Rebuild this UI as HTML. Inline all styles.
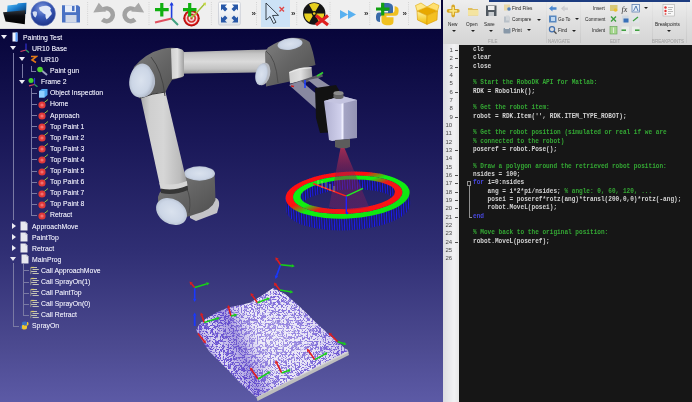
<!DOCTYPE html>
<html><head><meta charset="utf-8">
<style>*{margin:0;padding:0;box-sizing:border-box}
html,body{width:692px;height:402px;overflow:hidden;background:#07053a}
body{position:relative;font-family:"Liberation Sans",sans-serif;-webkit-font-smoothing:antialiased}
.abs{position:absolute}
svg{display:block}
#view{left:0;top:28px;width:443px;height:374px;background:linear-gradient(#07053a 0%,#1a1858 30%,#302f74 60%,#4c4a90 85%,#5c5aa6 100%)}
#scene{position:absolute;left:0;top:0}
#tb{will-change:transform;left:0;top:0;width:441px;height:28.5px;background:#efefef;border-bottom:1px solid #d8d8d8}
.sep{position:absolute;top:2px;width:1px;height:23px;border-left:1px dotted #c4c4c4}
.ic{position:absolute}
.tx{position:absolute;font-size:8px;transform:scaleX(.86);transform-origin:0 50%;-webkit-font-smoothing:antialiased;color:#e6e6f2;text-shadow:0 0 0.5px rgba(230,230,255,0.6);line-height:11px;white-space:nowrap}
.tri{position:absolute;width:0;height:0;border-left:3.6px solid transparent;border-right:3.6px solid transparent;border-top:4.5px solid #ececf4}
.trr{position:absolute;width:0;height:0;border-top:3.3px solid transparent;border-bottom:3.3px solid transparent;border-left:4.8px solid #ececf4}
.vl{position:absolute;width:1px;background:#7a7aa4}
.hl{position:absolute;height:1px;background:#7a7aa4}
#ml{left:441px;top:0;width:251px;height:402px;background:#161616;border-left:2.5px solid transparent;background-clip:padding-box;will-change:transform}
#rib{left:0;top:0;width:249px;height:44.5px;background:linear-gradient(#eeeeee,#e2e2e2 40%,#d4d4d4)}
#gut{left:0;top:44px;width:16px;height:358px;background:linear-gradient(90deg,#dcdce0,#f2f2f4 70%,#e6e6e6)}
.code{position:absolute;left:30px;top:45px;font-family:"Liberation Mono",monospace;font-size:6.6px;line-height:8.3px;white-space:pre;color:#d4d4d4;font-weight:bold;transform:scaleX(.924);transform-origin:0 50%}
.ln{position:absolute;left:1px;top:45px;font-family:"Liberation Sans",sans-serif;font-size:6px;line-height:8.3px;color:#484848;white-space:pre}
.cm{color:#34a834}
.kw{color:#4848e0}
.rl{position:absolute;font-size:5.9px;line-height:8px;color:#1c1c1c;white-space:nowrap;transform:scaleX(.8);transform-origin:0 50%;margin-top:-0.3px}
.lab{position:absolute;font-size:5px;line-height:8px;color:#a0a0a0;white-space:nowrap;transform:scaleX(.9);transform-origin:0 50%}
#topstrip{position:absolute;left:45.5px;top:0;width:201px;height:1.6px;background:#1c3c80;z-index:3}
#labband{position:absolute;left:0;top:37px;width:249px;height:7.5px;background:linear-gradient(#d2d2d2,#cbcbcb);z-index:-1}
.dash{position:absolute;left:11.8px;width:3.5px;height:0.9px;background:#505050;margin-top:-0.4px}
.arr{position:absolute;width:0;height:0;border-left:2px solid transparent;border-right:2px solid transparent;border-top:2.2px solid #202020}
.rsep{position:absolute;top:2px;width:1px;height:41px;background:linear-gradient(#e8e8e8,#c8c8c8)}
.fold{position:absolute;left:23.5px;width:4.6px;height:4.6px;border:0.7px solid #909090;background:#161616}
.foldl{position:absolute;left:25.5px;width:0.7px;background:#909090}
.foldh{position:absolute;left:25.5px;width:3px;height:0.7px;background:#909090}
.chev{position:absolute;top:8.5px;font-size:8px;line-height:10px;color:#303030;font-weight:bold}

</style></head><body>
<div id="view" class="abs"></div>
<svg id="scene" width="443" height="402" viewBox="0 0 443 402" style="position:absolute;left:0;top:0">
<defs>
 <linearGradient id="gUA" x1="0" y1="0" x2="0" y2="1">
  <stop offset="0" stop-color="#a4a4a4"/><stop offset="0.18" stop-color="#c6c6c6"/><stop offset="0.5" stop-color="#dadada"/><stop offset="0.8" stop-color="#c2c2c2"/><stop offset="1" stop-color="#999"/>
 </linearGradient>
 <linearGradient id="gLA" x1="0" y1="0" x2="1" y2="0">
  <stop offset="0" stop-color="#a8a8a8"/><stop offset="0.2" stop-color="#cfcfcf"/><stop offset="0.5" stop-color="#d6d6d6"/><stop offset="0.85" stop-color="#bcbcbc"/><stop offset="1" stop-color="#9a9a9a"/>
 </linearGradient>
 <linearGradient id="gHous" x1="0" y1="0" x2="1" y2="1">
  <stop offset="0" stop-color="#808080"/><stop offset="0.45" stop-color="#666"/><stop offset="1" stop-color="#4e4e4e"/>
 </linearGradient>
 <radialGradient id="gCap" cx="0.5" cy="0.5" r="0.55">
  <stop offset="0" stop-color="#dae2ee"/><stop offset="0.7" stop-color="#ccd6e6"/><stop offset="0.9" stop-color="#bcc6d6"/><stop offset="1" stop-color="#a0a8b6"/>
 </radialGradient>
 <linearGradient id="gRing" x1="0" y1="0" x2="1" y2="0">
  <stop offset="0" stop-color="#d0d0d0"/><stop offset="0.5" stop-color="#e0e0e0"/><stop offset="1" stop-color="#a0a0a0"/>
 </linearGradient>
 <linearGradient id="gBox" x1="0" y1="0" x2="1" y2="0">
  <stop offset="0" stop-color="#b0b0d0"/><stop offset="0.5" stop-color="#d0d0ec"/><stop offset="0.56" stop-color="#f0f0ff"/><stop offset="0.62" stop-color="#a4a4c4"/><stop offset="1" stop-color="#9494b4"/>
 </linearGradient>
 <linearGradient id="gCone" x1="0" y1="0" x2="0" y2="1">
  <stop offset="0" stop-color="#c03050" stop-opacity="0.8"/><stop offset="0.4" stop-color="#902050" stop-opacity="0.45"/><stop offset="1" stop-color="#802060" stop-opacity="0.4"/>
 </linearGradient>
 <linearGradient id="gBandO" x1="0" y1="0" x2="1" y2="1">
  <stop offset="0" stop-color="#ff1010"/><stop offset="0.36" stop-color="#ff1010"/><stop offset="0.48" stop-color="#10f010"/><stop offset="1" stop-color="#10e010"/>
 </linearGradient>
 <linearGradient id="gBandI" x1="0" y1="0" x2="1" y2="1">
  <stop offset="0" stop-color="#10f010"/><stop offset="0.42" stop-color="#10f010"/><stop offset="0.54" stop-color="#f01818"/><stop offset="1" stop-color="#ff1010"/>
 </linearGradient>
 <pattern id="pBlue" width="2.5" height="20" patternUnits="userSpaceOnUse">
  <rect width="0.9" height="20" fill="#1c1cf4"/><rect x="0.9" width="1.6" height="20" fill="#0c0c50" fill-opacity="0.35"/>
 </pattern>
 <pattern id="pDots" width="7" height="7" patternUnits="userSpaceOnUse">
  <rect width="7" height="7" fill="#d8d4f0"/>
  <path d="M0 1Q2 0 3 2T6 3M1 5Q2 3 4 5T7 6M5 0.5L6.5 1.5" stroke="#7a5ae0" stroke-width="0.8" fill="none"/>
 </pattern>
 <pattern id="pDots2" width="5" height="5" patternUnits="userSpaceOnUse">
  <rect width="5" height="5" fill="#9a80e8"/>
  <path d="M0 1Q2 2 3 1T5 3M1 4L2 3" stroke="#e8e4f8" stroke-width="0.6" fill="none"/>
 </pattern>
 <filter id="fNoise" x="0" y="0" width="1" height="1" filterUnits="objectBoundingBox">
  <feTurbulence type="turbulence" baseFrequency="0.38" numOctaves="1" seed="5" result="n"/>
  <feColorMatrix in="n" type="matrix" values="0 0 0 0 0  0 0 0 0 0  0 0 0 0 0  -9 0 0 0 1.7" result="a"/>
  <feFlood flood-color="#6c54d4" result="w"/>
  <feComposite in="w" in2="a" operator="in" result="wd"/>
  <feComposite in="wd" in2="SourceGraphic" operator="atop"/>
 </filter>
 <linearGradient id="gSurfDark" gradientUnits="userSpaceOnUse" x1="196" y1="345" x2="335" y2="285">
  <stop offset="0" stop-color="#5038c0" stop-opacity="0.45"/>
  <stop offset="0.13" stop-color="#5038c0" stop-opacity="0.05"/>
  <stop offset="0.26" stop-color="#5038c0" stop-opacity="0.42"/>
  <stop offset="0.42" stop-color="#ffffff" stop-opacity="0.12"/>
  <stop offset="0.62" stop-color="#ffffff" stop-opacity="0.05"/>
  <stop offset="0.85" stop-color="#5038c0" stop-opacity="0.12"/>
  <stop offset="1" stop-color="#5038c0" stop-opacity="0.25"/>
 </linearGradient>
 <radialGradient id="gSurfLight" cx="0.55" cy="0.45" r="0.45">
  <stop offset="0" stop-color="#ffffff" stop-opacity="0.35"/><stop offset="1" stop-color="#ffffff" stop-opacity="0"/>
 </radialGradient>
</defs>

<!-- ===== Robot ===== -->
<!-- lower arm (elbow to base) -->
<!-- base -->
<path d="M190 203 L216 198 Q220 200 219 206 L217 213 L196 221 L190 218 Z" fill="#c4c4c8"/>
<path d="M158 197 Q159 189 170 187.5 L184 186 L184 173.5 L214.6 173.5 L215.5 200 Q212 210 196 214 Q180 220 166 218 Q157 207 158 197 Z" fill="url(#gHous)"/>
<path d="M186 187 Q192 198 189 213" stroke="#4a4a4a" stroke-width="1" fill="none"/>
<ellipse cx="199.5" cy="173.5" rx="15.5" ry="7.2" fill="url(#gCap)"/>
<path d="M140 94 L165 90 L187 183 Q174 189 160 186 Z" fill="url(#gLA)"/>
<path d="M159.5 183 Q172 187 186.8 181 L187.6 186 Q174 192 160.5 189 Z" fill="#d6d6d6"/>
<path d="M160.5 188.5 Q174 191.5 187.6 185.5 L188 190 Q174 196 161 193 Z" fill="#363636"/>
<ellipse cx="171.5" cy="211.5" rx="16.5" ry="12.3" transform="rotate(32 171.5 211.5)" fill="url(#gCap)"/>
<!-- upper arm -->
<path d="M176 52.3 L268 49.5 L268 72.2 L176 73.8 Z" fill="url(#gUA)"/>
<!-- shoulder housing -->
<path d="M134 67 Q146 53 162 49 Q170 47 176 48 L183 50 L183 77 L172 80 Q168 86 165.5 92 Q152 93 140 98.5 Q131 92 130 80 Z" fill="url(#gHous)"/>
<path d="M140 98.3 Q152 93.2 165.5 92" stroke="#383838" stroke-width="1" fill="none"/>
<path d="M151 57 Q162 70 165 96" stroke="#444" stroke-width="1" fill="none"/>
<path d="M171 48.5 L177 48 Q183 49 184 52 L184 76 Q180 78 172 79 Z" fill="url(#gRing)"/>
<path d="M143 64 Q156 70 155 84 Q152 97 141 97.5 Z" fill="#b4bccc"/>
<ellipse cx="141" cy="80.5" rx="11.6" ry="17" transform="rotate(10 141 80.5)" fill="url(#gCap)"/>
<!-- wrist -->
<path d="M265 52 L268 47.5 Q279 40.5 291 37.8 Q304 37 309.5 42 Q313 50 315.5 65 L290.5 72 L290 81.5 L266 86.5 Z" fill="url(#gHous)"/>
<path d="M266 51 Q276 58 278 83" stroke="#4a4a4a" stroke-width="0.9" fill="none"/>
<ellipse cx="263.5" cy="74" rx="6.6" ry="11.4" transform="rotate(12 263.5 74)" fill="#b8bcc4"/>
<ellipse cx="261.5" cy="74.3" rx="6" ry="11" transform="rotate(12 261.5 74.3)" fill="url(#gCap)"/>
<ellipse cx="290" cy="44" rx="12.6" ry="5.8" transform="rotate(-8 290 44)" fill="url(#gCap)"/>
<path d="M289 72 Q300 66.5 311.5 67 L312.5 78.5 Q302 81.5 290 83.5 Z" fill="url(#gRing)"/>
<path d="M289.5 72.5 Q300 67.5 311.5 67.8" stroke="#f0f0f0" stroke-width="0.8" fill="none"/>
<path d="M290 84 L322 73.5 L323 76.5 L292 87.5 Z" fill="#5a5a64"/>
<!-- tool bracket -->
<path d="M289 85 L301 81 L326 102 L316 109 Z" fill="#8888a0"/>
<path d="M308 80 L318 78 L333 88 L324 93 Z" fill="#9090a4"/>
<path d="M315 88 L336 85 L339 90 L338 132 L320 133 L316 118 Z" fill="#121212"/>
<!-- paint gun box -->
<path d="M324 101 L342 96 L357 100 L357 138 L332 141 L329 140 Z" fill="url(#gBox)"/>
<path d="M324 101 L342 96 L357 100 L340 104 Z" fill="#c4c4e0"/>
<rect x="333.5" y="93" width="10" height="4" fill="#666"/>
<ellipse cx="338.5" cy="97" rx="5" ry="2" fill="#666"/>
<ellipse cx="338.5" cy="93" rx="5" ry="2" fill="#8c8c8c"/>
<path d="M335 140 L350 139 L350 147 Q343 150 335 147 Z" fill="#5c5c5c"/>
<!-- axes on flange -->
<path d="M305 80 V88" stroke="#2040ff" stroke-width="1.6"/>
<path d="M317 76 L323 72.5" stroke="#30d030" stroke-width="1.6"/>
<path d="M291 86 L294 86.5" stroke="#d02020" stroke-width="1.4"/>



<g transform="rotate(-3 347.6 195)"><!-- ===== ring ===== -->
<path fill-rule="evenodd" fill="url(#pBlue)" d="M285.5 195.2 A62.1 23.4 0 0 1 409.7 195.2 L409.7 207 A62.1 23.4 0 0 1 285.5 207 Z M303.35 199.25 A47.25 14.65 0 0 1 392.15 199.25 A47.25 14.65 0 0 1 303.35 199.25 Z"/>
<path fill-rule="evenodd" fill="url(#gBandO)" d="M285.5 195.2 A62.1 23.4 0 0 1 409.7 195.2 A62.1 23.4 0 0 1 285.5 195.2 Z M293 194.7 A54.7 19 0 0 1 402.4 194.7 A54.7 19 0 0 1 293 194.7 Z"/>
<path fill-rule="evenodd" fill="url(#gBandI)" d="M293 194.7 A54.7 19 0 0 1 402.4 194.7 A54.7 19 0 0 1 293 194.7 Z M300.5 194.25 A47.25 14.65 0 0 1 395 194.25 A47.25 14.65 0 0 1 300.5 194.25 Z"/>
</g>
<!-- ===== spray cone ===== -->
<path d="M340.5 148 L344.5 148 L369 207 Q349 213 329 207 Z" fill="url(#gCone)"/>
<path d="M313 183.5 L346.3 196.2" stroke="#ff2020" stroke-width="1.4"/>
<path d="M318 180 V186 M322 181 V188 M326 182 V189 M330 184 V191 M334 186 V192" stroke="#c8e080" stroke-width="0.6"/>
<path d="M346.3 196.2 L363 188.4" stroke="#20f020" stroke-width="1.4"/>
<path d="M346.3 196.2 V213" stroke="#2020ff" stroke-width="1.4"/>
<circle cx="347" cy="213" r="1.3" fill="#2020ff"/>

<!-- ===== painted surface ===== -->
<path d="M256.4 397 L348 351 L349 355 L257.5 401 Z" fill="#bdbdbd"/>
<path d="M256.4 394 L347 349 L348.5 352.5 L256.4 397.5 Z" fill="#d4d4d4"/>
<path d="M196.3 330.3 Q199 322 209 317 Q220 310 231 307 Q242 305 250 302.8 Q262 296 273 288 L285 294 Q300 306 315 321.8 Q330 336 348 351 L256.4 397 Q242 386 228 370 Q218 360 209 351 Q202 341 196.3 330.3 Z" fill="#e6e2f6" filter="url(#fNoise)"/>
<path d="M196.3 330.3 Q199 322 209 317 Q220 310 231 307 Q242 305 250 302.8 Q262 296 273 288 L285 294 Q300 306 315 321.8 Q330 336 348 351 L256.4 397 Q242 386 228 370 Q218 360 209 351 Q202 341 196.3 330.3 Z" fill="url(#gSurfLight)"/>
<path d="M196.3 330.3 Q199 322 209 317 Q220 310 231 307 Q242 305 250 302.8 Q262 296 273 288 L285 294 Q300 306 315 321.8 Q330 336 348 351 L256.4 397 Q242 386 228 370 Q218 360 209 351 Q202 341 196.3 330.3 Z" fill="url(#gSurfDark)"/>
<g><path d="M280.6 264.7 L276.5 275.9" stroke="#1838ff" stroke-width="1.6"/><path d="M275.4 278.9 L274.8 275.3 L278.2 276.5 Z" fill="#1838ff"/><path d="M280.6 264.7 L277.2 259.8" stroke="#e01c1c" stroke-width="1.6"/><path d="M275.4 257.2 L278.7 258.8 L275.8 260.8 Z" fill="#e01c1c"/><path d="M280.6 264.7 L291.6 265.9" stroke="#18d018" stroke-width="1.6"/><path d="M294.8 266.2 L291.4 267.6 L291.8 264.1 Z" fill="#18d018"/><path d="M194.7 287.6 L194.7 298.8" stroke="#1838ff" stroke-width="1.6"/><path d="M194.7 302.0 L192.9 298.8 L196.5 298.8 Z" fill="#1838ff"/><path d="M194.7 287.6 L191.6 283.9" stroke="#e01c1c" stroke-width="1.6"/><path d="M189.5 281.5 L192.9 282.8 L190.2 285.1 Z" fill="#e01c1c"/><path d="M194.7 287.6 L206.4 283.9" stroke="#18d018" stroke-width="1.6"/><path d="M209.5 283.0 L207.0 285.6 L205.9 282.3 Z" fill="#18d018"/><path d="M194.7 326.0 L194.7 315.7" stroke="#1838ff" stroke-width="1.8"/><path d="M194.7 312.5 L196.5 315.7 L192.9 315.7 Z" fill="#1838ff"/><path d="M204.2 322.4 L201.8 315.5" stroke="#e01c1c" stroke-width="1.6"/><path d="M200.8 312.5 L203.5 315.0 L200.2 316.1 Z" fill="#e01c1c"/><path d="M204.2 322.4 L216.9 318.6" stroke="#18d018" stroke-width="1.6"/><path d="M220.0 317.7 L217.4 320.3 L216.4 316.9 Z" fill="#18d018"/><path d="M198.0 333.5 L204.0 341.0" stroke="#e01c1c" stroke-width="1.6"/><path d="M206.0 343.5 L202.6 342.1 L205.4 339.9 Z" fill="#e01c1c"/><path d="M231.0 316.0 L228.8 308.1" stroke="#e01c1c" stroke-width="1.6"/><path d="M228.0 305.0 L230.5 307.6 L227.1 308.6 Z" fill="#e01c1c"/><path d="M231.0 316.0 L234.3 315.2" stroke="#18d018" stroke-width="1.6"/><path d="M237.4 314.5 L234.7 316.9 L233.9 313.5 Z" fill="#18d018"/><path d="M257.5 302.8 L252.4 295.6" stroke="#e01c1c" stroke-width="1.6"/><path d="M250.5 293.0 L253.8 294.6 L250.9 296.6 Z" fill="#e01c1c"/><path d="M257.5 302.8 L267.0 299.1" stroke="#18d018" stroke-width="1.6"/><path d="M270.0 298.0 L267.6 300.8 L266.4 297.5 Z" fill="#18d018"/><path d="M279.9 290.0 L275.9 285.1" stroke="#e01c1c" stroke-width="1.6"/><path d="M273.9 282.6 L277.3 284.0 L274.5 286.2 Z" fill="#e01c1c"/><path d="M279.9 290.0 L290.1 291.8" stroke="#18d018" stroke-width="1.6"/><path d="M293.3 292.3 L289.8 293.5 L290.4 290.0 Z" fill="#18d018"/><path d="M258.0 379.0 L251.8 370.1" stroke="#e01c1c" stroke-width="1.6"/><path d="M250.0 367.5 L253.3 369.1 L250.4 371.1 Z" fill="#e01c1c"/><path d="M258.0 379.0 L267.9 373.1" stroke="#18d018" stroke-width="1.6"/><path d="M270.6 371.4 L268.8 374.6 L267.0 371.5 Z" fill="#18d018"/><path d="M281.7 373.0 L276.7 363.2" stroke="#e01c1c" stroke-width="1.6"/><path d="M275.3 360.3 L278.3 362.4 L275.2 363.9 Z" fill="#e01c1c"/><path d="M281.7 373.0 L288.0 370.8" stroke="#18d018" stroke-width="1.6"/><path d="M291.0 369.8 L288.5 372.5 L287.4 369.2 Z" fill="#18d018"/><path d="M314.8 359.6 L308.8 351.2" stroke="#e01c1c" stroke-width="1.6"/><path d="M306.9 348.6 L310.2 350.2 L307.3 352.2 Z" fill="#e01c1c"/><path d="M314.8 359.6 L324.9 354.1" stroke="#18d018" stroke-width="1.6"/><path d="M327.7 352.6 L325.7 355.7 L324.0 352.6 Z" fill="#18d018"/><path d="M337.7 341.7 L331.0 335.0" stroke="#e01c1c" stroke-width="1.6"/><path d="M328.7 332.7 L332.2 333.7 L329.7 336.2 Z" fill="#e01c1c"/><path d="M337.7 341.7 L343.6 343.6" stroke="#18d018" stroke-width="1.6"/><path d="M346.6 344.6 L343.0 345.3 L344.1 341.9 Z" fill="#18d018"/></g>
</svg>

<div id="tree"><div class="vl" style="left:13px;top:53.4px;height:166.6px"></div><div class="vl" style="left:22px;top:63.5px;height:14.2px"></div><div class="vl" style="left:31px;top:65.6px;height:5.0px"></div><div class="hl" style="left:31px;top:70.6px;width:5.0px"></div><div class="vl" style="left:31px;top:87.7px;height:127.2px"></div><div class="hl" style="left:31px;top:92.8px;width:6.0px"></div><div class="hl" style="left:31px;top:103.9px;width:6.0px"></div><div class="hl" style="left:31px;top:115.0px;width:6.0px"></div><div class="hl" style="left:31px;top:126.1px;width:6.0px"></div><div class="hl" style="left:31px;top:137.2px;width:6.0px"></div><div class="hl" style="left:31px;top:148.3px;width:6.0px"></div><div class="hl" style="left:31px;top:159.4px;width:6.0px"></div><div class="hl" style="left:31px;top:170.5px;width:6.0px"></div><div class="hl" style="left:31px;top:181.6px;width:6.0px"></div><div class="hl" style="left:31px;top:192.7px;width:6.0px"></div><div class="hl" style="left:31px;top:203.8px;width:6.0px"></div><div class="hl" style="left:31px;top:214.9px;width:6.0px"></div><div class="vl" style="left:13px;top:263.3px;height:62.6px"></div><div class="hl" style="left:13px;top:325.9px;width:6.0px"></div><div class="vl" style="left:23px;top:264.3px;height:50.5px"></div><div class="hl" style="left:23px;top:270.4px;width:6.0px"></div><div class="hl" style="left:23px;top:281.5px;width:6.0px"></div><div class="hl" style="left:23px;top:292.6px;width:6.0px"></div><div class="hl" style="left:23px;top:303.7px;width:6.0px"></div><div class="hl" style="left:23px;top:314.8px;width:6.0px"></div><div class="tri" style="left:1px;top:35.1px"></div><div class="ic" style="left:12px;top:32.3px"><svg width="6" height="10" viewBox="0 0 6 10"><rect x="0.5" y="0.5" width="5" height="9" fill="#f0f4ff"/><rect x="3.5" y="0.5" width="2" height="9" fill="#5aa0ff"/></svg></div><div class="tx" style="left:22.6px;top:31.8px">Painting Test</div><div class="tri" style="left:10px;top:46.2px"></div><div class="ic" style="left:20px;top:43.4px"><svg width="10" height="10" viewBox="0 0 10 10"><path d="M6 0.5V7" stroke="#3030d0" stroke-width="1.2"/><path d="M6 7L0.5 8.5" stroke="#d04060" stroke-width="1.2"/><path d="M6 7L9 9.5" stroke="#30a060" stroke-width="1.2"/></svg></div><div class="tx" style="left:32px;top:42.9px">UR10 Base</div><div class="tri" style="left:19px;top:57.3px"></div><div class="ic" style="left:29.5px;top:54.5px"><svg width="8" height="9" viewBox="0 0 8 9"><path d="M1 1.5H6.5L2 5L6 7.5" stroke="#e07818" stroke-width="1.6" fill="none"/></svg></div><div class="tx" style="left:41px;top:54.0px">UR10</div><div class="ic" style="left:37px;top:65.6px"><svg width="11" height="10" viewBox="0 0 11 10"><path d="M3 3L10 9" stroke="#9aa0c0" stroke-width="2"/><circle cx="3" cy="3.5" r="2.8" fill="#50d030"/></svg></div><div class="tx" style="left:50.3px;top:65.1px">Paint gun</div><div class="tri" style="left:19px;top:79.5px"></div><div class="ic" style="left:28px;top:76.7px"><svg width="10" height="10" viewBox="0 0 10 10"><path d="M6.5 1V7.5" stroke="#3030d0" stroke-width="1.2"/><path d="M6.5 7.5L1 8.8" stroke="#d04060" stroke-width="1.2"/><path d="M6.5 7.5L9.5 9.8" stroke="#30a060" stroke-width="1.2"/><circle cx="3" cy="3.5" r="2.5" fill="#40d030"/></svg></div><div class="tx" style="left:41px;top:76.2px">Frame 2</div><div class="ic" style="left:38px;top:88.3px"><svg width="10" height="10" viewBox="0 0 10 10"><path d="M1 3L4 1H9.5V7L6.5 9.5H1Z" fill="#50a8f0"/><path d="M1 3H6.5V9.5H1Z" fill="#90d0ff"/></svg></div><div class="tx" style="left:50.3px;top:87.3px">Object Inspection</div><div class="ic" style="left:37.5px;top:98.9px"><svg width="11" height="10" viewBox="0 0 11 10"><path d="M5 4.5L10 0.5" stroke="#90c040" stroke-width="1"/><circle cx="4" cy="6" r="3.6" fill="#e03838"/><circle cx="4" cy="6" r="1.6" fill="#f07070"/></svg></div><div class="tx" style="left:50.3px;top:98.4px">Home</div><div class="ic" style="left:37.5px;top:110.0px"><svg width="11" height="10" viewBox="0 0 11 10"><path d="M5 4.5L10 0.5" stroke="#90c040" stroke-width="1"/><circle cx="4" cy="6" r="3.6" fill="#e03838"/><circle cx="4" cy="6" r="1.6" fill="#f07070"/></svg></div><div class="tx" style="left:50.3px;top:109.5px">Approach</div><div class="ic" style="left:37.5px;top:121.1px"><svg width="11" height="10" viewBox="0 0 11 10"><path d="M5 4.5L10 0.5" stroke="#90c040" stroke-width="1"/><circle cx="4" cy="6" r="3.6" fill="#e03838"/><circle cx="4" cy="6" r="1.6" fill="#f07070"/></svg></div><div class="tx" style="left:50.3px;top:120.6px">Top Paint 1</div><div class="ic" style="left:37.5px;top:132.2px"><svg width="11" height="10" viewBox="0 0 11 10"><path d="M5 4.5L10 0.5" stroke="#90c040" stroke-width="1"/><circle cx="4" cy="6" r="3.6" fill="#e03838"/><circle cx="4" cy="6" r="1.6" fill="#f07070"/></svg></div><div class="tx" style="left:50.3px;top:131.7px">Top Paint 2</div><div class="ic" style="left:37.5px;top:143.3px"><svg width="11" height="10" viewBox="0 0 11 10"><path d="M5 4.5L10 0.5" stroke="#90c040" stroke-width="1"/><circle cx="4" cy="6" r="3.6" fill="#e03838"/><circle cx="4" cy="6" r="1.6" fill="#f07070"/></svg></div><div class="tx" style="left:50.3px;top:142.8px">Top Paint 3</div><div class="ic" style="left:37.5px;top:154.4px"><svg width="11" height="10" viewBox="0 0 11 10"><path d="M5 4.5L10 0.5" stroke="#90c040" stroke-width="1"/><circle cx="4" cy="6" r="3.6" fill="#e03838"/><circle cx="4" cy="6" r="1.6" fill="#f07070"/></svg></div><div class="tx" style="left:50.3px;top:153.9px">Top Paint 4</div><div class="ic" style="left:37.5px;top:165.5px"><svg width="11" height="10" viewBox="0 0 11 10"><path d="M5 4.5L10 0.5" stroke="#90c040" stroke-width="1"/><circle cx="4" cy="6" r="3.6" fill="#e03838"/><circle cx="4" cy="6" r="1.6" fill="#f07070"/></svg></div><div class="tx" style="left:50.3px;top:165.0px">Top Paint 5</div><div class="ic" style="left:37.5px;top:176.6px"><svg width="11" height="10" viewBox="0 0 11 10"><path d="M5 4.5L10 0.5" stroke="#90c040" stroke-width="1"/><circle cx="4" cy="6" r="3.6" fill="#e03838"/><circle cx="4" cy="6" r="1.6" fill="#f07070"/></svg></div><div class="tx" style="left:50.3px;top:176.1px">Top Paint 6</div><div class="ic" style="left:37.5px;top:187.7px"><svg width="11" height="10" viewBox="0 0 11 10"><path d="M5 4.5L10 0.5" stroke="#90c040" stroke-width="1"/><circle cx="4" cy="6" r="3.6" fill="#e03838"/><circle cx="4" cy="6" r="1.6" fill="#f07070"/></svg></div><div class="tx" style="left:50.3px;top:187.2px">Top Paint 7</div><div class="ic" style="left:37.5px;top:198.8px"><svg width="11" height="10" viewBox="0 0 11 10"><path d="M5 4.5L10 0.5" stroke="#90c040" stroke-width="1"/><circle cx="4" cy="6" r="3.6" fill="#e03838"/><circle cx="4" cy="6" r="1.6" fill="#f07070"/></svg></div><div class="tx" style="left:50.3px;top:198.3px">Top Paint 8</div><div class="ic" style="left:37.5px;top:209.9px"><svg width="11" height="10" viewBox="0 0 11 10"><path d="M5 4.5L10 0.5" stroke="#90c040" stroke-width="1"/><circle cx="4" cy="6" r="3.6" fill="#e03838"/><circle cx="4" cy="6" r="1.6" fill="#f07070"/></svg></div><div class="tx" style="left:50.3px;top:209.4px">Retract</div><div class="trr" style="left:11.5px;top:222.5px"></div><div class="ic" style="left:20px;top:221.0px"><svg width="8" height="10" viewBox="0 0 8 10"><path d="M0.5 0.5H5.5L7.5 2.5V9.5H0.5Z" fill="#e8e8f0"/><path d="M5.5 0.5V2.5H7.5" fill="#b0b0c0"/></svg></div><div class="tx" style="left:32px;top:220.5px">ApproachMove</div><div class="trr" style="left:11.5px;top:233.6px"></div><div class="ic" style="left:20px;top:232.1px"><svg width="8" height="10" viewBox="0 0 8 10"><path d="M0.5 0.5H5.5L7.5 2.5V9.5H0.5Z" fill="#e8e8f0"/><path d="M5.5 0.5V2.5H7.5" fill="#b0b0c0"/></svg></div><div class="tx" style="left:32px;top:231.6px">PaintTop</div><div class="trr" style="left:11.5px;top:244.7px"></div><div class="ic" style="left:20px;top:243.2px"><svg width="8" height="10" viewBox="0 0 8 10"><path d="M0.5 0.5H5.5L7.5 2.5V9.5H0.5Z" fill="#e8e8f0"/><path d="M5.5 0.5V2.5H7.5" fill="#b0b0c0"/></svg></div><div class="tx" style="left:32px;top:242.7px">Retract</div><div class="tri" style="left:9.5px;top:257.1px"></div><div class="ic" style="left:20.5px;top:254.3px"><svg width="8" height="10" viewBox="0 0 8 10"><path d="M0.5 0.5H5.5L7.5 2.5V9.5H0.5Z" fill="#e8e8f0"/><path d="M5.5 0.5V2.5H7.5" fill="#b0b0c0"/></svg></div><div class="tx" style="left:32px;top:253.8px">MainProg</div><div class="ic" style="left:29.5px;top:265.9px"><svg width="9" height="9" viewBox="0 0 9 9"><path d="M1 1.5H7M2.5 3.5H8.8M1 5.5H7M2.5 7.5H8.8" stroke="#c4c4b4" stroke-width="1.2"/><path d="M1 1.5H4" stroke="#e0d070" stroke-width="1.2"/><path d="M0.8 1V8.2" stroke="#8a8a8a" stroke-width="1"/></svg></div><div class="tx" style="left:41px;top:264.9px">Call ApproachMove</div><div class="ic" style="left:29.5px;top:277.0px"><svg width="9" height="9" viewBox="0 0 9 9"><path d="M1 1.5H7M2.5 3.5H8.8M1 5.5H7M2.5 7.5H8.8" stroke="#c4c4b4" stroke-width="1.2"/><path d="M1 1.5H4" stroke="#e0d070" stroke-width="1.2"/><path d="M0.8 1V8.2" stroke="#8a8a8a" stroke-width="1"/></svg></div><div class="tx" style="left:41px;top:276.0px">Call SprayOn(1)</div><div class="ic" style="left:29.5px;top:288.1px"><svg width="9" height="9" viewBox="0 0 9 9"><path d="M1 1.5H7M2.5 3.5H8.8M1 5.5H7M2.5 7.5H8.8" stroke="#c4c4b4" stroke-width="1.2"/><path d="M1 1.5H4" stroke="#e0d070" stroke-width="1.2"/><path d="M0.8 1V8.2" stroke="#8a8a8a" stroke-width="1"/></svg></div><div class="tx" style="left:41px;top:287.1px">Call PaintTop</div><div class="ic" style="left:29.5px;top:299.2px"><svg width="9" height="9" viewBox="0 0 9 9"><path d="M1 1.5H7M2.5 3.5H8.8M1 5.5H7M2.5 7.5H8.8" stroke="#c4c4b4" stroke-width="1.2"/><path d="M1 1.5H4" stroke="#e0d070" stroke-width="1.2"/><path d="M0.8 1V8.2" stroke="#8a8a8a" stroke-width="1"/></svg></div><div class="tx" style="left:41px;top:298.2px">Call SprayOn(0)</div><div class="ic" style="left:29.5px;top:310.3px"><svg width="9" height="9" viewBox="0 0 9 9"><path d="M1 1.5H7M2.5 3.5H8.8M1 5.5H7M2.5 7.5H8.8" stroke="#c4c4b4" stroke-width="1.2"/><path d="M1 1.5H4" stroke="#e0d070" stroke-width="1.2"/><path d="M0.8 1V8.2" stroke="#8a8a8a" stroke-width="1"/></svg></div><div class="tx" style="left:41px;top:309.3px">Call Retract</div><div class="ic" style="left:20px;top:321.4px"><svg width="9" height="9" viewBox="0 0 9 9"><path d="M4.5 0.5C2 0.5 2 1.5 2 3V4H5V4.5H1.5C0.5 4.5 0.5 6 0.5 6.5C0.5 8 1.2 8 2 8V6C2 5.3 2.5 5 3.5 5H6C7 5 7 4.5 7 3.5V2C7 0.8 6 0.5 4.5 0.5Z" fill="#3a70c0"/><path d="M4.5 8.5C7 8.5 7 7.5 7 6V5H4V4.5H7.5C8.5 4.5 8.5 3 8.5 2.5C8.5 1 7.8 1 7 1V3C7 3.7 6.5 4 5.5 4H3C2 4 2 4.5 2 5.5V7C2 8.2 3 8.5 4.5 8.5Z" fill="#f0c830"/></svg></div><div class="tx" style="left:32px;top:320.4px">SprayOn</div></div>
<div id="tb" class="abs">
<svg width="442" height="27" viewBox="0 0 442 27" style="position:absolute;left:0;top:0">
<defs>
 <linearGradient id="tFold" x1="0" y1="0" x2="1" y2="1"><stop offset="0" stop-color="#60c8ff"/><stop offset="0.5" stop-color="#1878c8"/><stop offset="1" stop-color="#08305a"/></linearGradient>
 <linearGradient id="tFoldF" x1="0" y1="0" x2="0" y2="1"><stop offset="0" stop-color="#303840"/><stop offset="0.4" stop-color="#0c0c10"/><stop offset="1" stop-color="#000"/></linearGradient>
 <radialGradient id="tGlobe" cx="0.45" cy="0.3" r="0.75"><stop offset="0" stop-color="#8aa0e0"/><stop offset="0.45" stop-color="#3a5ab8"/><stop offset="1" stop-color="#1a2e80"/></radialGradient>
 <radialGradient id="tTgt" cx="0.5" cy="0.5" r="0.5"><stop offset="0" stop-color="#c00000"/><stop offset="0.25" stop-color="#f8f0f0"/><stop offset="0.45" stop-color="#d01010"/><stop offset="0.65" stop-color="#f8f0f0"/><stop offset="0.8" stop-color="#d81818"/><stop offset="1" stop-color="#a00000"/></radialGradient>
 <linearGradient id="tBox" x1="0" y1="0" x2="0" y2="1"><stop offset="0" stop-color="#fff4a0"/><stop offset="1" stop-color="#f0b800"/></linearGradient>
 <linearGradient id="tFit" x1="0" y1="0" x2="0" y2="1"><stop offset="0" stop-color="#ffffff"/><stop offset="1" stop-color="#e0e4ea"/></linearGradient>
</defs>
<!-- folder -->
<path d="M7.5 5.5 L17 4.5 L18 3.2 L26.5 2.8 L26 14 L7 14 Z" fill="url(#tFold)"/>
<path d="M3 12.2 L25.5 10.2 L24.8 24.3 L5.6 21.5 Z" fill="url(#tFoldF)"/>
<!-- globe -->
<circle cx="43.2" cy="13.6" r="12.2" fill="url(#tGlobe)" stroke="#5a70b8" stroke-width="0.6"/>
<path d="M39 7.5 Q43 5.2 47 5.8 Q50 6.5 51 8.5 Q49.5 10 51.5 12.5 Q52.5 14 50 16 Q48 18.5 46.5 19.5 Q45 17 45.5 14.5 Q43 13.5 41.5 11.5 Q39.5 11 39 7.5 Z" fill="#e4eaf8"/>
<path d="M32.5 12 Q35 10.5 37 12 Q37.5 15 35.5 17.5 Q33 16.5 32.5 12 Z" fill="#d4dcf0"/>
<!-- floppy -->
<path d="M62 5.2 H78 L80 7 V22.5 H62 Z" fill="#4a72c4"/>
<rect x="65" y="5.2" width="11" height="7" fill="#e8eef8"/>
<rect x="65.5" y="15" width="11" height="7.5" fill="#d0d8e8"/>
<rect x="72" y="6" width="2.5" height="5" fill="#4a72c4"/>
<!-- seps -->
<path d="M87.6 2V25 M149 2V25 M211.4 2V25 M256.5 2V25 M296.7 2V25 M330 2V25 M369.7 2V25 M408.5 2V25" stroke="#c8c8c8" stroke-width="0.7" stroke-dasharray="1 1.2"/>
<!-- undo -->
<path d="M102.9 9.6 A6.3 6.3 0 1 1 102.4 19.6" stroke="#a2a2a2" stroke-width="4.6" fill="none"/>
<path d="M98.8 2.7 L93.3 12.6 L106.2 11.6 Z" fill="#a8a8a8"/>
<!-- redo -->
<path d="M134.5 9.6 A6.3 6.3 0 1 0 135 19.6" stroke="#a2a2a2" stroke-width="4.6" fill="none"/>
<path d="M138.6 2.7 L144.1 12.6 L131.2 11.6 Z" fill="#a8a8a8"/>
<!-- add frame -->
<path d="M171.6 3 V18.5" stroke="#2040e0" stroke-width="1.6"/><path d="M169.5 5.5 L171.6 2 L173.7 5.5 Z" fill="#2040e0"/>
<path d="M171.6 18.5 L155 22.5" stroke="#e05060" stroke-width="2"/>
<path d="M171.6 18.5 L178 25" stroke="#40a080" stroke-width="2"/>
<path d="M161.8 3 V16.5 M155 9.7 H168.7" stroke="#10b010" stroke-width="3.2"/>
<!-- add target -->
<circle cx="191.5" cy="18.2" r="8.2" fill="url(#tTgt)"/>
<path d="M191.5 18.2 L205 3.5" stroke="#a0c030" stroke-width="1.3"/><path d="M203 3 L206 2.5 L205.5 6 Z" fill="#c8d840"/>
<path d="M189.7 3 V16.5 M183 9.7 H196.5" stroke="#10b010" stroke-width="3.2"/>
<!-- fit -->
<rect x="218.5" y="2" width="21.8" height="23" rx="1.5" fill="url(#tFit)" stroke="#c8ccd4" stroke-width="0.8"/>
<path d="M221 4.5 L227 4.5 L225 6.5 L227.5 9 L225 11.5 L222.5 9 L221 10.5 Z" fill="#2858a8"/>
<path d="M238 4.5 L232 4.5 L234 6.5 L231.5 9 L234 11.5 L236.5 9 L238 10.5 Z" fill="#2858a8"/>
<path d="M221 22.5 L227 22.5 L225 20.5 L227.5 18 L225 15.5 L222.5 18 L221 16.5 Z" fill="#2858a8"/>
<path d="M238 22.5 L232 22.5 L234 20.5 L231.5 18 L234 15.5 L236.5 18 L238 16.5 Z" fill="#2858a8"/>
<!-- pointer selected -->
<rect x="261" y="0" width="29" height="27" fill="#cce2f6"/>
<path d="M266 3 L266 20 L270 16.5 L273.5 23.5 L276 22.3 L272.5 15.5 L278.5 15.3 Z" fill="#d4e6f8" stroke="#202830" stroke-width="0.85" stroke-linejoin="round"/>
<path d="M279.5 7 L284 11.5 M284 7 L279.5 11.5" stroke="#e04848" stroke-width="1.4"/>
<!-- radiation -->
<circle cx="314.2" cy="13.5" r="11.2" fill="#141414"/>
<path d="M314.2 13.5 L309 4.5 A10 10 0 0 1 319.4 4.5 Z M314.2 13.5 L324.2 13.5 A10 10 0 0 1 319.2 22.2 Z M314.2 13.5 L309.2 22.2 A10 10 0 0 1 304.2 13.5 Z" fill="#e8d020"/>
<circle cx="314.2" cy="13.5" r="2.5" fill="#141414"/><circle cx="314.2" cy="13.5" r="1.3" fill="#e8d020"/>
<path d="M316 15.5 L328 25 M328 15.5 L316 25" stroke="#e02020" stroke-width="3.2"/>
<!-- fast fwd -->
<path d="M340 9.9 L348 14.5 L340 19 Z M348 9.9 L356 14.5 L348 19 Z" fill="#58b0f0"/>
<!-- python -->
<path d="M387 3 C381 3 381 5 381 8 V11 H388 V12.5 H379 C376 12.5 376 16 376 18 C376 21 378 22 380 22 V18 C380 16 381.5 15 384 15 H390 C392.5 15 393 13.5 393 12 V7.5 C393 4 390 3 387 3 Z" fill="#3a6aa8"/>
<path d="M387.5 25.3 C393.5 25.3 393.5 23.3 393.5 20.3 V17.3 H386.5 V15.8 H395.5 C398.5 15.8 398.6 12.3 398.6 10.3 C398.6 7.3 396.6 6.3 394.6 6.3 V10.3 C394.6 12.3 393 13.3 390.5 13.3 H384.5 C382 13.3 381.5 14.8 381.5 16.3 V20.8 C381.5 24.3 384.5 25.3 387.5 25.3 Z" fill="#f0c020"/>
<path d="M382.7 2.7 V15.4 M376 9 H389.5" stroke="#10a010" stroke-width="3.2"/>
<!-- box -->
<path d="M417 11 L427 7 L437.5 11 L427 15.5 Z" fill="#e8a800"/>
<path d="M417 11 L427 15.5 L427 24.4 L417.5 20 Z" fill="url(#tBox)" stroke="#d89800" stroke-width="0.6"/>
<path d="M437.5 11 L427 15.5 L427 24.4 L437 20 Z" fill="#f4c020" stroke="#d89800" stroke-width="0.6"/>
<path d="M417 11 L415.5 5.5 L421 3 L427 7 Z" fill="#ffe888" stroke="#e0a800" stroke-width="0.6"/>
<path d="M437.5 11 L439 5.5 L433.5 3 L427 7 Z" fill="#ffe070" stroke="#e0a800" stroke-width="0.6"/>
</svg>
<div class="chev" style="left:251.5px">&#187;</div>
<div class="chev" style="left:291px">&#187;</div>
<div class="chev" style="left:364px">&#187;</div>
<div class="chev" style="left:402.5px">&#187;</div>
</div>

<div id="ml" class="abs"><div id="topstrip"></div><div id="rib" class="abs"><div class="rl" style="left:4.7px;top:20.0px">New</div><div class="arr" style="left:8.5px;top:29.6px"></div><div class="rl" style="left:22.7px;top:20.0px">Open</div><div class="arr" style="left:27.5px;top:29.6px"></div><div class="rl" style="left:41.2px;top:20.0px">Save</div><div class="arr" style="left:46.0px;top:29.6px"></div><div class="rl" style="left:68.6px;top:4.2px">Find Files</div><div class="rl" style="left:68.6px;top:15.5px">Compare</div><div class="arr" style="left:94.4px;top:18.5px"></div><div class="rl" style="left:68.6px;top:26.4px">Print</div><div class="arr" style="left:84.3px;top:29.4px"></div><div class="rsep" style="left:102.5px"></div><div class="rl" style="left:114.5px;top:15.0px">Go To</div><div class="arr" style="left:131.5px;top:18.0px"></div><div class="rl" style="left:114.5px;top:26.6px">Find</div><div class="arr" style="left:129.3px;top:29.6px"></div><div class="rsep" style="left:137.0px"></div><div class="rl" style="left:149.6px;top:4.0px">Insert</div><div class="arr" style="left:201.3px;top:7.0px"></div><div class="rl" style="left:142.0px;top:15.1px">Comment</div><div class="rl" style="left:148.7px;top:26.2px">Indent</div><div class="rsep" style="left:208.6px"></div><div class="rl" style="left:212.0px;top:20.2px">Breakpoints</div><div class="arr" style="left:224.4px;top:29.5px"></div><div class="rsep" style="left:243.0px"></div><div class="lab" style="left:44.7px;top:36.5px">FILE</div><div class="lab" style="left:105.2px;top:36.5px">NAVIGATE</div><div class="lab" style="left:167.2px;top:36.5px">EDIT</div><div class="lab" style="left:209.2px;top:36.5px">BREAKPOINTS</div><svg class="abs" style="left:0;top:0" width="250" height="44">
<!-- New: yellow plus -->
<path d="M10.2 6.2V15.6M5.5 10.9H14.9" stroke="#d8a828" stroke-width="3.6" stroke-linecap="round"/>
<path d="M10.2 7V14.8M6.3 10.9H14.1" stroke="#f8e480" stroke-width="1.6"/>
<!-- Open folder -->
<path d="M25 8H29L30 9H35V15.5H25Z" fill="#e0c060"/><path d="M25 10H35.5V15.5H25Z" fill="#f4e4a0"/>
<!-- Save floppy -->
<rect x="43" y="5.5" width="10.5" height="10.5" fill="#505860"/><rect x="45" y="6" width="6.5" height="4" fill="#f0f0f0"/><rect x="45.5" y="12" width="5.5" height="4" fill="#c8ccd0"/>
<!-- find files -->
<rect x="61" y="4.5" width="6" height="6" fill="#e8d8a8"/><circle cx="66" cy="9" r="1.8" fill="#5080c0"/>
<rect x="61" y="16.5" width="5.5" height="6" fill="#b8c0c8"/><rect x="63" y="15.5" width="3" height="5" fill="#d0d4d8"/>
<rect x="60.5" y="28" width="7" height="5.5" rx="1" fill="#8898a8"/><rect x="62" y="27" width="4" height="2" fill="#e0e0e0"/>
<!-- nav -->
<path d="M106 8.5L109.5 5.5V7.3H113.5V9.7H109.5V11.5Z" fill="#4a88d0"/>
<path d="M118 8.5L121.5 5.5V11.5Z" fill="#c8c8cc"/><path d="M120 7.5H125V10H120Z" fill="#d0d0d4"/>
<rect x="106" y="15.5" width="7.5" height="7" fill="#5888c0"/><rect x="108" y="17" width="4" height="4" fill="#c0d8f0"/>
<circle cx="109" cy="29.3" r="2.6" fill="none" stroke="#4070b0" stroke-width="1.2"/><path d="M111 31.3L113.5 33.8" stroke="#505050" stroke-width="1.4"/>
<!-- edit icons -->
<rect x="167" y="5" width="7.5" height="6" fill="#d8c878"/><circle cx="172.5" cy="10" r="1.8" fill="#e8c030"/>
<text x="178.5" y="11.5" font-family="Liberation Serif" font-style="italic" font-size="8" fill="#303030">fx</text>
<rect x="189" y="4.5" width="7.5" height="7.5" fill="#e8f0f8" stroke="#6080b0" stroke-width="0.8"/><path d="M190.5 11L193 6L195 11" stroke="#3060a0" stroke-width="0.8" fill="none"/>
<path d="M168 16.5L173 21.5M173 16.5L168 21.5" stroke="#40a040" stroke-width="1.4"/>
<rect x="179" y="15.5" width="6.5" height="7" fill="#d0d8e0"/><rect x="180.5" y="18.5" width="5" height="4" fill="#3870b8"/>
<rect x="189" y="15.5" width="7" height="7" fill="#e0e4e8"/><path d="M190 21L195 17" stroke="#40a040" stroke-width="1.2"/>
<rect x="167" y="26.5" width="7" height="7.5" fill="#a8d890" stroke="#60a050" stroke-width="0.6"/><path d="M170.5 27.5V33" stroke="#f0f0f0" stroke-width="0.8"/>
<rect x="178.5" y="26.5" width="7.5" height="7.5" fill="#e8ece8"/><path d="M178.5 30.2H183" stroke="#40a040" stroke-width="1.6"/>
<rect x="189" y="26.5" width="7.5" height="7.5" fill="#e8ece8"/><path d="M196.5 30.2H192" stroke="#40a040" stroke-width="1.6"/>
<!-- breakpoints -->
<rect x="220" y="4.5" width="11.5" height="11.5" fill="#f8f8f8" stroke="#b0b0b0" stroke-width="0.6"/>
<circle cx="222.5" cy="7.5" r="1.2" fill="#e03030"/><circle cx="222.5" cy="11" r="1.2" fill="#e03030"/><circle cx="222.5" cy="14" r="1" fill="#e06060"/>
<path d="M225 7.5H230M225 9.5H229M225 11.5H230M225 13.5H228" stroke="#909090" stroke-width="0.6"/>
</svg><div id="labband"></div></div><div id="gut" class="abs"></div><div class="ln" style="top:45.8px;left:6.5px">1</div><div class="dash" style="top:50.3px"></div><div class="code" style="top:45.8px">clc</div><div class="ln" style="top:54.1px;left:6.5px">2</div><div class="dash" style="top:58.6px"></div><div class="code" style="top:54.1px">clear</div><div class="ln" style="top:62.5px;left:6.5px">3</div><div class="dash" style="top:67.0px"></div><div class="code" style="top:62.5px">close</div><div class="ln" style="top:70.8px;left:6.5px">4</div><div class="ln" style="top:79.2px;left:6.5px">5</div><div class="code" style="top:79.2px"><span class="cm">% Start the RoboDK API for Matlab:</span></div><div class="ln" style="top:87.5px;left:6.5px">6</div><div class="dash" style="top:92.0px"></div><div class="code" style="top:87.5px">RDK = Robolink();</div><div class="ln" style="top:95.8px;left:6.5px">7</div><div class="ln" style="top:104.2px;left:6.5px">8</div><div class="code" style="top:104.2px"><span class="cm">% Get the robot item:</span></div><div class="ln" style="top:112.5px;left:6.5px">9</div><div class="dash" style="top:117.0px"></div><div class="code" style="top:112.5px">robot = RDK.Item('', RDK.ITEM_TYPE_ROBOT);</div><div class="ln" style="top:120.9px;left:2.5px">10</div><div class="ln" style="top:129.2px;left:2.5px">11</div><div class="code" style="top:129.2px"><span class="cm">% Get the robot position (simulated or real if we are</span></div><div class="ln" style="top:137.5px;left:2.5px">12</div><div class="code" style="top:137.5px"><span class="cm">% connected to the robot)</span></div><div class="ln" style="top:145.9px;left:2.5px">13</div><div class="dash" style="top:150.4px"></div><div class="code" style="top:145.9px">poseref = robot.Pose();</div><div class="ln" style="top:154.2px;left:2.5px">14</div><div class="ln" style="top:162.6px;left:2.5px">15</div><div class="code" style="top:162.6px"><span class="cm">% Draw a polygon around the retrieved robot position:</span></div><div class="ln" style="top:170.9px;left:2.5px">16</div><div class="dash" style="top:175.4px"></div><div class="code" style="top:170.9px">nsides = 100;</div><div class="ln" style="top:179.2px;left:2.5px">17</div><div class="dash" style="top:183.7px"></div><div class="code" style="top:179.2px"><span class="kw">for</span> i=0:nsides</div><div class="ln" style="top:187.6px;left:2.5px">18</div><div class="dash" style="top:192.1px"></div><div class="code" style="top:187.6px">    ang = i*2*pi/nsides; <span class="cm">% angle: 0, 60, 120, ...</span></div><div class="ln" style="top:195.9px;left:2.5px">19</div><div class="dash" style="top:200.4px"></div><div class="code" style="top:195.9px">    posei = poseref*rotz(ang)*transl(200,0,0)*rotz(-ang);</div><div class="ln" style="top:204.3px;left:2.5px">20</div><div class="dash" style="top:208.8px"></div><div class="code" style="top:204.3px">    robot.MoveL(posei);</div><div class="ln" style="top:212.6px;left:2.5px">21</div><div class="dash" style="top:217.1px"></div><div class="code" style="top:212.6px"><span class="kw">end</span></div><div class="ln" style="top:220.9px;left:2.5px">22</div><div class="ln" style="top:229.3px;left:2.5px">23</div><div class="code" style="top:229.3px"><span class="cm">% Move back to the original position:</span></div><div class="ln" style="top:237.6px;left:2.5px">24</div><div class="dash" style="top:242.1px"></div><div class="code" style="top:237.6px">robot.MoveL(poseref);</div><div class="ln" style="top:246.0px;left:2.5px">25</div><div class="ln" style="top:254.3px;left:2.5px">26</div><div class="fold" style="top:181.2px"></div><div class="foldl" style="top:186.2px;height:30.9px"></div><div class="foldh" style="top:217.1px"></div></div>
</body></html>
